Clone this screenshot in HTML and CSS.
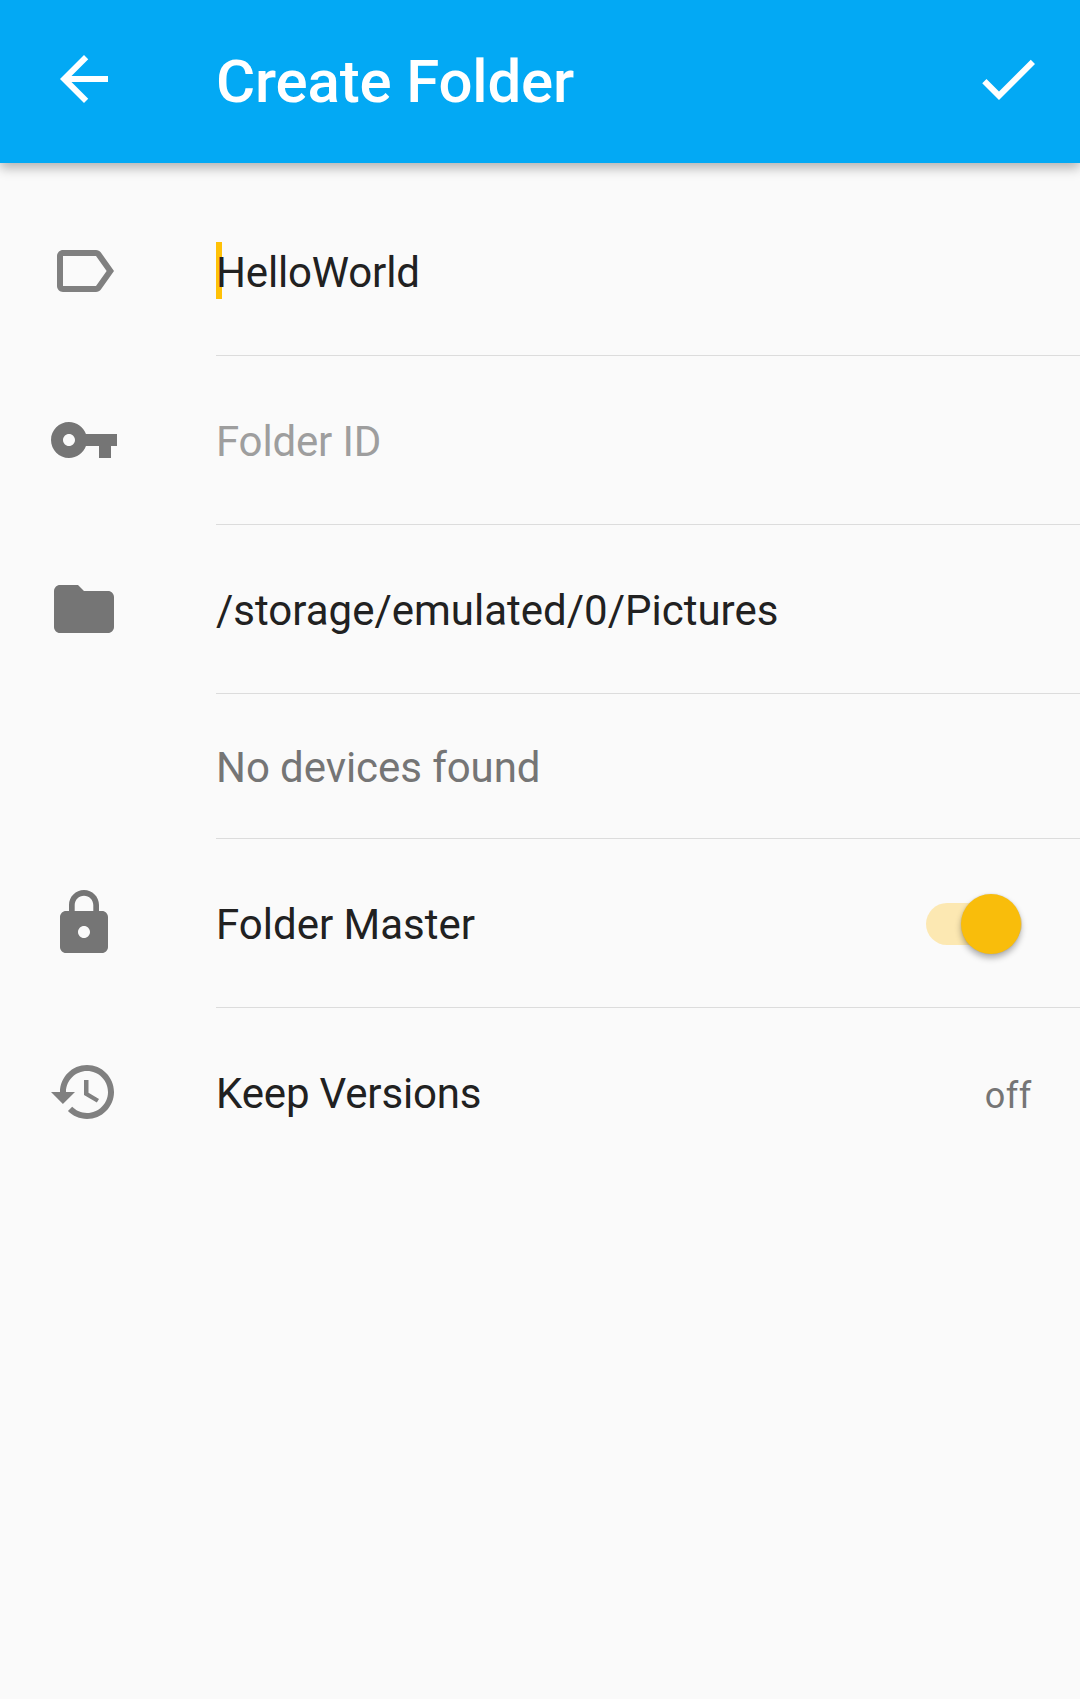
FILE: index.html
```html
<!DOCTYPE html>
<html lang="en">
<head>
<meta charset="utf-8">
<title>Create Folder</title>
<link rel="stylesheet" href="styles.css">
</head>
<body>
<header class="toolbar">
  <svg class="icon" viewBox="0 0 24 24"><path d="M20 11H7.83l5.59-5.59L12 4l-8 8 8 8 1.41-1.41L7.83 13H20v-2z"/></svg>
  <h1 class="title">Create Folder</h1>
  <svg class="icon" viewBox="0 0 24 24"><path d="M9 16.17L4.83 12l-1.42 1.41L9 19 21 7l-1.41-1.41z"/></svg>
</header>
<main class="form">
  <div class="row">
    <svg class="icon light" viewBox="0 0 24 24"><path d="M17.63 5.84C17.27 5.33 16.67 5 16 5L5 5.01C3.9 5.01 3 5.9 3 7v10c0 1.1.9 1.99 2 1.99L16 19c.67 0 1.27-.33 1.63-.84L22 12l-4.37-6.16zM16 17H5V7h11l3.55 5L16 17z"/></svg>
    <div class="content"><span class="text tight focused">HelloWorld</span></div>
  </div>
  <div class="row">
    <svg class="icon" viewBox="0 0 24 24"><path d="M12.65 10C11.83 7.67 9.61 6 7 6c-3.31 0-6 2.69-6 6s2.69 6 6 6c2.61 0 4.83-1.67 5.65-4H17v4h4v-4h2v-4H12.65zM7 14c-1.1 0-2-.9-2-2s.9-2 2-2 2 .9 2 2-.9 2-2 2z"/></svg>
    <div class="content"><span class="text tight hint">Folder ID</span></div>
  </div>
  <div class="row">
    <svg class="icon" viewBox="0 0 24 24"><path d="M10 4H4c-1.1 0-1.99.9-1.99 2L2 18c0 1.1.9 2 2 2h16c1.1 0 2-.9 2-2V8c0-1.1-.9-2-2-2h-8l-2-2z"/></svg>
    <div class="content"><span class="text">/storage/emulated/0/Pictures</span></div>
  </div>
  <div class="row short">
    <div class="content"><span class="text secondary">No devices found</span></div>
  </div>
  <div class="row">
    <svg class="icon" viewBox="0 0 24 24"><path d="M18 8h-1V6c0-2.76-2.24-5-5-5S7 3.24 7 6v2H6c-1.1 0-2 .9-2 2v10c0 1.1.9 2 2 2h12c1.1 0 2-.9 2-2V10c0-1.1-.9-2-2-2zm-6 9c-1.1 0-2-.9-2-2s.9-2 2-2 2 .9 2 2-.9 2-2 2zm3.1-9H8.9V6c0-1.71 1.39-3.1 3.1-3.1s3.1 1.39 3.1 3.1v2z"/></svg>
    <div class="content"><span class="text">Folder Master</span><span class="switch"><span class="thumb"></span></span></div>
  </div>
  <div class="row last">
    <svg class="icon light" viewBox="0 0 24 24"><path d="M13 3c-4.97 0-9 4.03-9 9H1l3.89 3.89.07.14L9 12H6c0-3.87 3.13-7 7-7s7 3.13 7 7-3.13 7-7 7c-1.93 0-3.68-.79-4.94-2.06l-1.42 1.42C8.27 19.99 10.51 21 13 21c4.97 0 9-4.03 9-9s-4.03-9-9-9zm-1 5v5l4.28 2.54.72-1.21-3.5-2.08V8H12z"/></svg>
    <div class="content"><span class="text tight">Keep Versions</span><span class="value">off</span></div>
  </div>
</main>
</body>
</html>
```
FILE: styles.css
```css
* { box-sizing: border-box; }
body {
  margin: 0;
  min-height: 100vh;
  background: #fafafa;
  color: #212121;
  font-family: Roboto, sans-serif;
  overflow: hidden;
}
.icon {
  width: 72px;
  height: 72px;
  flex: none;
  fill: #757575;
}
.icon.light { fill: #808080; }
.toolbar {
  display: flex;
  align-items: center;
  height: 163px;
  padding: 0 36px 5px 48px;
  background: #03a9f4;
  box-shadow: 0 5px 11px rgba(0, 0, 0, 0.29);
}
.toolbar .icon { fill: #fff; }
.title {
  flex: 1;
  margin: 5px 0 0 96px;
  color: #fff;
  font-size: 60px;
  font-weight: 500;
  line-height: 71px;
  letter-spacing: -0.17px;
}
.form { padding-top: 24px; }
.row {
  display: flex;
  align-items: flex-start;
  height: 169px;
  padding-left: 48px;
}
.row > .icon { margin-top: 48px; }
.content {
  display: flex;
  flex: 1;
  align-items: center;
  justify-content: space-between;
  height: 169px;
  margin-left: 96px;
  padding-right: 48px;
  border-bottom: 1px solid #dcdcdc;
}
.short, .short .content { height: 145px; }
.short .content { margin-left: 168px; }
.last .content { border-bottom-color: transparent; }
.text {
  position: relative;
  padding-top: 3px;
  font-size: 42px;
  line-height: 49px;
}
.tight { letter-spacing: -0.16px; }
.hint { color: #9e9e9e; }
.secondary {
  color: #757575;
  letter-spacing: -0.07px;
}
.focused::before {
  content: "";
  position: absolute;
  z-index: -1;
  left: 0;
  top: -3px;
  width: 6px;
  height: 57px;
  background: #ffc107;
}
.value {
  padding-top: 7px;
  color: #757575;
  font-size: 36px;
  letter-spacing: 0.6px;
  line-height: 42px;
}
.switch {
  display: flex;
  align-items: center;
  justify-content: flex-end;
  width: 96px;
  height: 42px;
  margin: 1px 10px 0 0;
  padding-right: 1px;
  border-radius: 21px;
  background: #fce8b2;
}
.thumb {
  flex: none;
  width: 60px;
  height: 60px;
  border-radius: 50%;
  background: #f9bd0b;
  box-shadow: 0 4px 6px rgba(0, 0, 0, 0.3), 0 0 2px rgba(0, 0, 0, 0.14);
}
```
